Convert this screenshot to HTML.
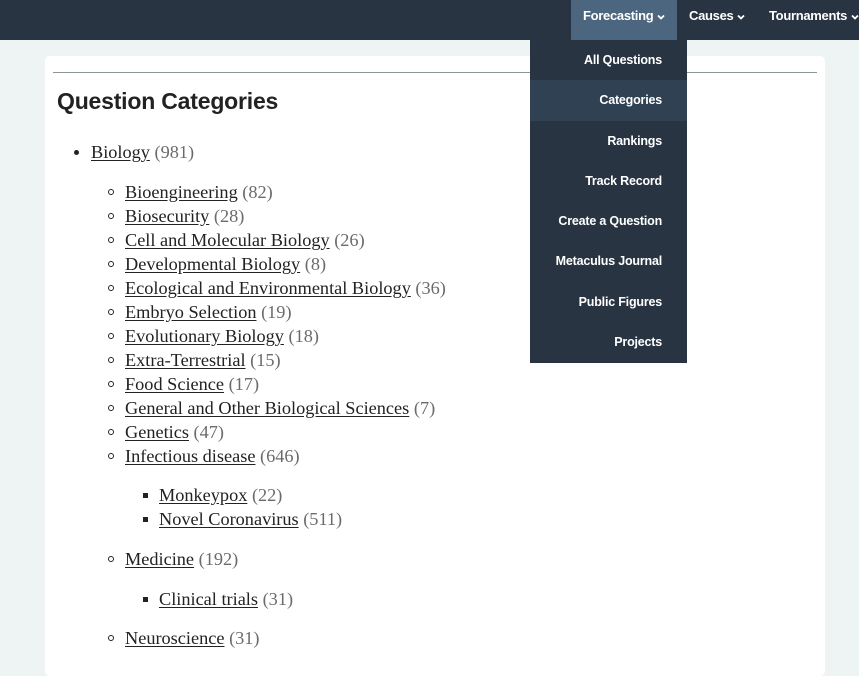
<!DOCTYPE html>
<html><head><meta charset="utf-8"><style>
*{margin:0;padding:0;box-sizing:border-box}
body{width:859px;height:653px;overflow:hidden;background:#eef3f3;font-family:"Liberation Sans",sans-serif;position:relative}
.nav{position:absolute;left:0;top:0;width:859px;height:40px;background:#283441}
.tab{position:absolute;top:0;height:40px;color:#fff;font-size:13px;font-weight:bold;line-height:32px;letter-spacing:-0.3px;white-space:nowrap}
.tab svg{vertical-align:middle;margin-left:4px}
.card{position:absolute;left:45px;top:56px;width:780px;height:620px;background:#fff;border-radius:5px}
.hr{position:absolute;left:53px;top:72px;width:764px;height:1px;background:#8e9597}
h1{position:absolute;left:57px;top:88px;font-size:23px;font-weight:bold;color:#222;letter-spacing:-0.2px}
.li{position:absolute;font-family:"Liberation Serif",serif;font-size:18.3px;color:#222;line-height:24px;white-space:nowrap}
.li a{color:#222;text-decoration:underline;text-underline-offset:2px}
.li span{color:#6b6b6b}
.b{position:absolute}
.dd{position:absolute;left:530px;top:40px;width:157px;height:323px;background:#283441}
.di{position:absolute;color:#fff;font-size:12.5px;font-weight:bold;letter-spacing:-0.2px;white-space:nowrap}
</style></head><body>
<div class="nav"></div>
<div class="tab" style="left:571px;width:106px;background:#4d6680;padding-left:12px">Forecasting<svg width="8" height="6" viewBox="0 0 8 6"><path d="M1 1.5L4 4.5L7 1.5" stroke="#fff" stroke-width="1.8" fill="none"/></svg></div>
<div class="tab" style="left:689px">Causes<svg width="8" height="6" viewBox="0 0 8 6"><path d="M1 1.5L4 4.5L7 1.5" stroke="#fff" stroke-width="1.8" fill="none"/></svg></div>
<div class="tab" style="left:769px">Tournaments<svg width="8" height="6" viewBox="0 0 8 6"><path d="M1 1.5L4 4.5L7 1.5" stroke="#fff" stroke-width="1.8" fill="none"/></svg></div>

<div class="card"></div>
<div class="hr"></div>
<h1>Question Categories</h1>

<div class="b" style="left:74px;top:150px;width:5px;height:5px;border-radius:50%;background:#222"></div>
<div class="li" style="left:91px;top:140px"><a>Biology</a> <span>(981)</span></div>

<div id="subs"></div>
<script>
var s=[["Bioengineering","82",192,1],["Biosecurity","28",216,1],["Cell and Molecular Biology","26",240,1],["Developmental Biology","8",264,1],["Ecological and Environmental Biology","36",288,1],["Embryo Selection","19",312,1],["Evolutionary Biology","18",336,1],["Extra-Terrestrial","15",360,1],["Food Science","17",384,1],["General and Other Biological Sciences","7",408,1],["Genetics","47",432,1],["Infectious disease","646",456,1],["Monkeypox","22",495,2],["Novel Coronavirus","511",519,2],["Medicine","192",559,1],["Clinical trials","31",599,2],["Neuroscience","31",638,1]];
var h="";
s.forEach(function(i){
 var x=i[3]==1?125:159;
 if(i[3]==1)h+='<div class="b" style="left:108px;top:'+(i[2]-3)+'px;width:6px;height:6px;border-radius:50%;border:1px solid #222"></div>';
 else h+='<div class="b" style="left:143px;top:'+(i[2]-2)+'px;width:5px;height:5px;background:#222"></div>';
 h+='<div class="li" style="left:'+x+'px;top:'+(i[2]-12)+'px"><a>'+i[0]+'</a> <span>('+i[1]+')</span></div>';
});
document.getElementById("subs").innerHTML=h;
</script>

<div class="dd"></div>
<div class="b" style="left:530px;top:80px;width:157px;height:41px;background:#2f4152"></div>
<div class="di" style="left:530px;top:53px;width:132px;text-align:right">All Questions</div>
<div class="di" style="left:530px;top:93px;width:132px;text-align:right">Categories</div>
<div class="di" style="left:530px;top:134px;width:132px;text-align:right">Rankings</div>
<div class="di" style="left:530px;top:174px;width:132px;text-align:right">Track Record</div>
<div class="di" style="left:530px;top:214px;width:132px;text-align:right">Create a Question</div>
<div class="di" style="left:530px;top:254px;width:132px;text-align:right">Metaculus Journal</div>
<div class="di" style="left:530px;top:295px;width:132px;text-align:right">Public Figures</div>
<div class="di" style="left:530px;top:335px;width:132px;text-align:right">Projects</div>
</body></html>
